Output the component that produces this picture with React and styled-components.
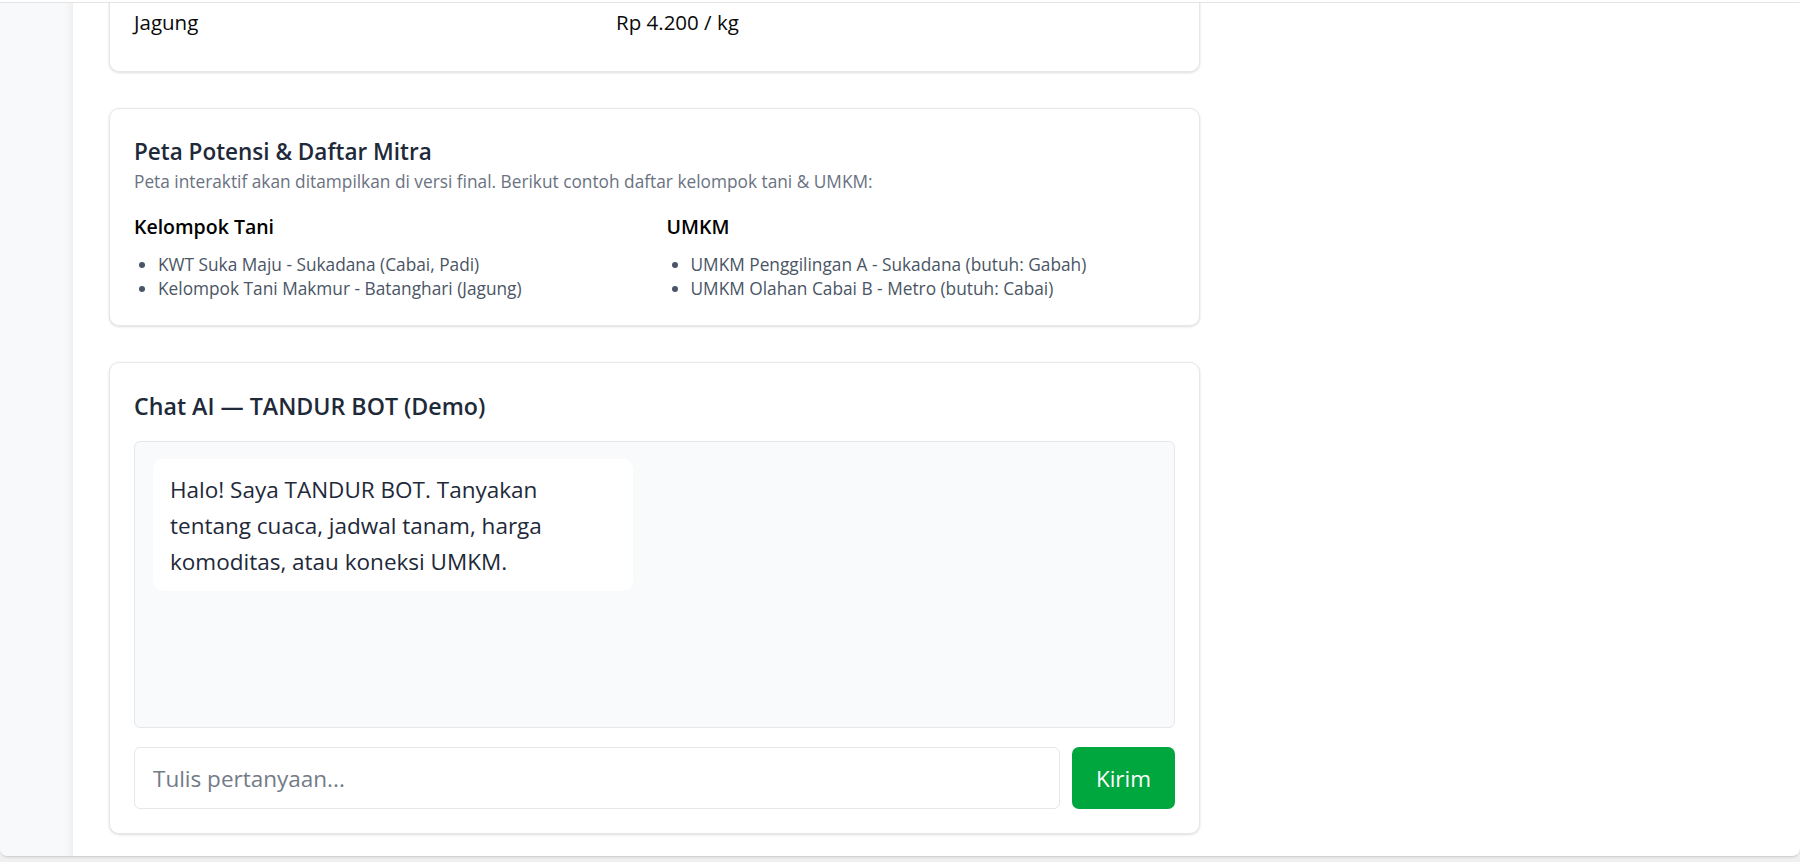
import React, { useLayoutEffect, useRef } from "react";
import styled, { createGlobalStyle } from "styled-components";

const GlobalStyle = createGlobalStyle`
  html, body { margin: 0; padding: 0; }
  body {
    background: #f0f0f0;
    font-family: "Open Sans", "Noto Sans", sans-serif;
    -webkit-font-smoothing: antialiased;
  }
  *, *::before, *::after { box-sizing: border-box; }
`;

const Shell = styled.div`
  height: 862px;
  padding-top: 2px;
  background: linear-gradient(#ffffff 0 2px, #f0f0f0 2px);
`;

const Frame = styled.div`
  height: 855px;
  display: flex;
  background: #ffffff;
  border-top: 1px solid #e4e4e4;
  border-bottom: 1px solid #d4d4d4;
  border-radius: 0 0 8px 8px;
  overflow: hidden;
  box-shadow: 0 1px 2px rgba(0, 0, 0, 0.08);
`;

const Sidebar = styled.aside`
  flex: 0 0 73px;
  background: #f8f9fa;
  box-shadow: inset -12px 0 10px -10px rgba(0, 0, 0, 0.06);
`;

const Main = styled.main`
  flex: 1;
  overflow: hidden;
  padding-left: 36px;
`;

const Column = styled.div`
  width: 1091px;
  display: flex;
  flex-direction: column;
  gap: 36px;
  padding: 40px 0 60px;
`;

const Card = styled.section`
  background: #ffffff;
  border: 1px solid #e5e7eb;
  border-radius: 10px;
  padding: 24px;
  box-shadow: 0 1px 3px rgba(0, 0, 0, 0.09), 0 1px 2px rgba(0, 0, 0, 0.05);
`;

const Title = styled.h2`
  margin: 0 0 ${(p) => p.$gap || 0}px;
  font-size: ${(p) => p.$size || 22.5}px;
  line-height: ${(p) => p.$lh || 37}px;
  font-weight: 600;
  color: #1e2939;
`;

const Subtitle = styled.p`
  margin: 0;
  font-size: 17.3px;
  line-height: 24px;
  color: #6a7282;
`;

const PriceRow = styled.div`
  display: grid;
  grid-template-columns: 482px 1fr;
  padding: 6px 0 10px;
  font-size: 20.5px;
  line-height: 30px;
  color: #0a0a0a;
`;

const Columns = styled.div`
  display: grid;
  grid-template-columns: 1fr 1fr;
  gap: 24px;
  margin-top: 19px;
`;

const GroupTitle = styled.h3`
  margin: 0 0 12px;
  font-size: 19.5px;
  line-height: 28px;
  font-weight: 600;
  color: #000000;
`;

const List = styled.ul`
  margin: 0;
  padding-left: 24px;
  list-style: disc;
  font-size: 17.3px;
  line-height: 24px;
  color: #4a5565;
  li::marker { color: #4a5565; }
`;

const ChatBox = styled.div`
  height: 287px;
  display: flex;
  flex-direction: column;
  align-items: flex-start;
  padding: 17px 18px;
  background: #f9fafb;
  border: 1px solid #e5e7eb;
  border-radius: 6px;
`;

const Bubble = styled.div`
  max-width: 480px;
  padding: 13px 17px 11px;
  background: #ffffff;
  border-radius: 10px;
  font-size: 22.5px;
  line-height: 36px;
  color: #1e2939;
`;

const InputRow = styled.form`
  display: flex;
  gap: 12px;
  margin-top: 19px;
`;

const Input = styled.input`
  flex: 1;
  height: 62px;
  padding: 0 18px;
  border: 1px solid #e5e7eb;
  border-radius: 6px;
  font-family: inherit;
  font-size: 22.5px;
  color: #1e2939;
  background: #ffffff;
  outline: none;
  &::placeholder { color: #737b87; }
`;

const SendButton = styled.button`
  flex: 0 0 103px;
  height: 62px;
  border: none;
  border-radius: 7px;
  background: #00a63e;
  color: #ffffff;
  font-family: inherit;
  font-size: 22.5px;
  cursor: pointer;
`;

const prices = [["Jagung", "Rp 4.200 / kg"]];

export default function App() {
  const mainRef = useRef(null);
  const anchorRef = useRef(null);

  useLayoutEffect(() => {
    const main = mainRef.current;
    const anchor = anchorRef.current;
    if (!main || !anchor) return;
    main.scrollTop += anchor.getBoundingClientRect().top - 108;
  }, []);

  return (
    <>
      <GlobalStyle />
      <Shell>
        <Frame>
          <Sidebar />
          <Main ref={mainRef}>
            <Column>
              <Card>
                {prices.map(([name, price]) => (
                  <PriceRow key={name}>
                    <span>{name}</span>
                    <span>{price}</span>
                  </PriceRow>
                ))}
              </Card>

              <Card ref={anchorRef}>
                <Title>Peta Potensi &amp; Daftar Mitra</Title>
                <Subtitle>
                  Peta interaktif akan ditampilkan di versi final. Berikut contoh daftar kelompok tani &amp; UMKM:
                </Subtitle>
                <Columns>
                  <div>
                    <GroupTitle>Kelompok Tani</GroupTitle>
                    <List>
                      <li>KWT Suka Maju - Sukadana (Cabai, Padi)</li>
                      <li>Kelompok Tani Makmur - Batanghari (Jagung)</li>
                    </List>
                  </div>
                  <div>
                    <GroupTitle>UMKM</GroupTitle>
                    <List>
                      <li>UMKM Penggilingan A - Sukadana (butuh: Gabah)</li>
                      <li>UMKM Olahan Cabai B - Metro (butuh: Cabai)</li>
                    </List>
                  </div>
                </Columns>
              </Card>

              <Card>
                <Title $gap={15} $lh={39} $size={23.2}>Chat AI — TANDUR BOT (Demo)</Title>
                <ChatBox>
                  <Bubble>
                    Halo! Saya TANDUR BOT. Tanyakan tentang cuaca, jadwal tanam, harga komoditas, atau koneksi UMKM.
                  </Bubble>
                </ChatBox>
                <InputRow onSubmit={(e) => e.preventDefault()}>
                  <Input placeholder="Tulis pertanyaan..." />
                  <SendButton type="submit">Kirim</SendButton>
                </InputRow>
              </Card>
            </Column>
          </Main>
        </Frame>
      </Shell>
    </>
  );
}
